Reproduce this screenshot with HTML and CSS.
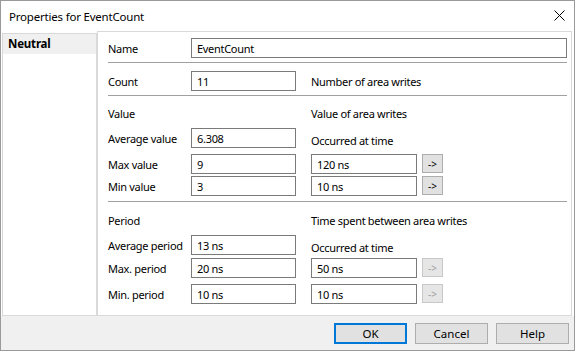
FILE: index.html
```html
<!DOCTYPE html>
<html lang="en">
<head>
    <meta charset="UTF-8">
    <title>Properties for EventCount</title>
    <link rel="stylesheet" href="styles.css">
</head>
<body>
    <div class="window">
        <div class="titlebar">
            <span class="title">Properties for EventCount</span>
            <svg class="close" width="11" height="11" viewBox="0 0 11 11">
                <path d="M0.5 0.5 L10.5 10.5 M10.5 0.5 L0.5 10.5" stroke="#000" stroke-width="1" fill="none"/>
            </svg>
        </div>

        <div class="main">
            <div class="sidebar">
                <div class="item selected">Neutral</div>
            </div>

            <div class="content">
                <div class="row r-name">
                    <span class="lbl">Name</span>
                    <input class="field wide" type="text" value="EventCount" readonly>
                </div>
                <div class="sep s1"></div>

                <div class="row r-count">
                    <span class="lbl">Count</span>
                    <input class="field" type="text" value="11" readonly>
                    <span class="col2">Number of area writes</span>
                </div>
                <div class="sep s2"></div>

                <div class="row r-vhead">
                    <span class="lbl">Value</span>
                    <span class="col2 head2">Value of area writes</span>
                </div>
                <div class="row r-avg">
                    <span class="lbl">Average value</span>
                    <input class="field" type="text" value="6.308" readonly>
                    <span class="col2 occ">Occurred at time</span>
                </div>
                <div class="row r-max">
                    <span class="lbl">Max value</span>
                    <input class="field" type="text" value="9" readonly>
                    <input class="field time" type="text" value="120 ns" readonly>
                    <button class="go">-&gt;</button>
                </div>
                <div class="row r-min">
                    <span class="lbl">Min value</span>
                    <input class="field" type="text" value="3" readonly>
                    <input class="field time" type="text" value="10 ns" readonly>
                    <button class="go">-&gt;</button>
                </div>
                <div class="sep s3"></div>

                <div class="row r-phead">
                    <span class="lbl">Period</span>
                    <span class="col2 head2">Time spent between area writes</span>
                </div>
                <div class="row r-pavg">
                    <span class="lbl">Average period</span>
                    <input class="field" type="text" value="13 ns" readonly>
                    <span class="col2 occ">Occurred at time</span>
                </div>
                <div class="row r-pmax">
                    <span class="lbl">Max. period</span>
                    <input class="field" type="text" value="20 ns" readonly>
                    <input class="field time" type="text" value="50 ns" readonly>
                    <button class="go" disabled>-&gt;</button>
                </div>
                <div class="row r-pmin">
                    <span class="lbl">Min. period</span>
                    <input class="field" type="text" value="10 ns" readonly>
                    <input class="field time" type="text" value="10 ns" readonly>
                    <button class="go" disabled>-&gt;</button>
                </div>
            </div>
        </div>

        <div class="footer">
            <button class="btn default">OK</button>
            <button class="btn">Cancel</button>
            <button class="btn">Help</button>
        </div>
    </div>
</body>
</html>
```

FILE: styles.css
```css
*{
    margin: 0;
    padding: 0;
    box-sizing: border-box;
}
body{
    font-family: "Noto Sans", "Open Sans", sans-serif;
    font-size: 11px;
    color: #000;
    background: #fff;
}
.window{
    width: 575px;
    height: 351px;
    border: 1px solid #9a9a9a;
    display: flex;
    flex-direction: column;
    background: #fff;
}
.titlebar{
    height: 30px;
    display: flex;
    align-items: center;
    padding-left: 8px;
    padding-top: 1px;
    font-size: 11.5px;
    letter-spacing: -0.2px;
}
.title{
    flex: 1;
}
.close{
    margin-right: 9px;
    margin-top: -2px;
}

.main{
    height: 285px;
    display: flex;
}
.sidebar{
    width: 95px;
    height: 283px;
    margin-top: 2px;
    margin-left: 1px;
    border: 1px solid #d9d9d9;
}
.item{
    height: 20px;
    line-height: 19px;
    padding-left: 5px;
    font-weight: bold;
    font-size: 11.5px;
    letter-spacing: -0.2px;
}
.selected{
    background: #f0f0f0;
}
.content{
    width: 475px;
    height: 285px;
    border: 1px solid #d9d9d9;
    padding: 6px 4px 0 10px;
}

.row{
    display: flex;
    align-items: center;
    height: 20px;
    white-space: nowrap;
    letter-spacing: -0.3px;
}
.lbl{
    width: 83px;
    flex: none;
}
.field{
    width: 105px;
    height: 20px;
    flex: none;
    border: 1px solid #7a7a7a;
    padding-left: 5px;
    font: inherit;
    letter-spacing: -0.3px;
    color: #000;
    background: #fff;
    outline: none;
}
.wide{
    flex: 1;
}
.col2{
    margin-left: 15px;
}
.head2{
    margin-left: 120px;
}
.time{
    width: 106px;
    margin-left: 15px;
}
.occ{
    padding-top: 5px;
}
.go{
    width: 21px;
    height: 19px;
    flex: none;
    margin-left: 5px;
    align-self: flex-start;
    font: inherit;
    font-size: 10px;
    letter-spacing: 0;
    background: #e1e1e1;
    border: 1px solid #adadad;
    color: #000;
}
.go:disabled{
    background: #e6e6e6;
    border-color: #c8c8c8;
    color: #a0a0a0;
}

.sep{
    height: 1px;
    background: #a0a0a0;
}
.s1{ margin-top: 4px; }
.r-count{ margin-top: 8px; }
.s2{ margin-top: 4px; }
.r-vhead{ margin-top: 7px; }
.r-avg{ margin-top: 5px; }
.r-max{ margin-top: 6px; }
.r-min{ margin-top: 2px; }
.s3{ margin-top: 5px; }
.r-phead{ margin-top: 8px; }
.r-pavg{ margin-top: 5px; }
.r-pmax{ margin-top: 3px; }
.r-pmin{ margin-top: 6px; }

.footer{
    flex: 1;
    background: #f0f0f0;
    display: flex;
    justify-content: flex-end;
    align-items: flex-start;
    gap: 8px;
    padding: 7px 5px 0 0;
}
.btn{
    width: 73px;
    height: 21px;
    font: inherit;
    font-size: 11.5px;
    color: #000;
    background: #e1e1e1;
    border: 1px solid #adadad;
}
.default{
    border: 2px solid #0078d7;
}
```
